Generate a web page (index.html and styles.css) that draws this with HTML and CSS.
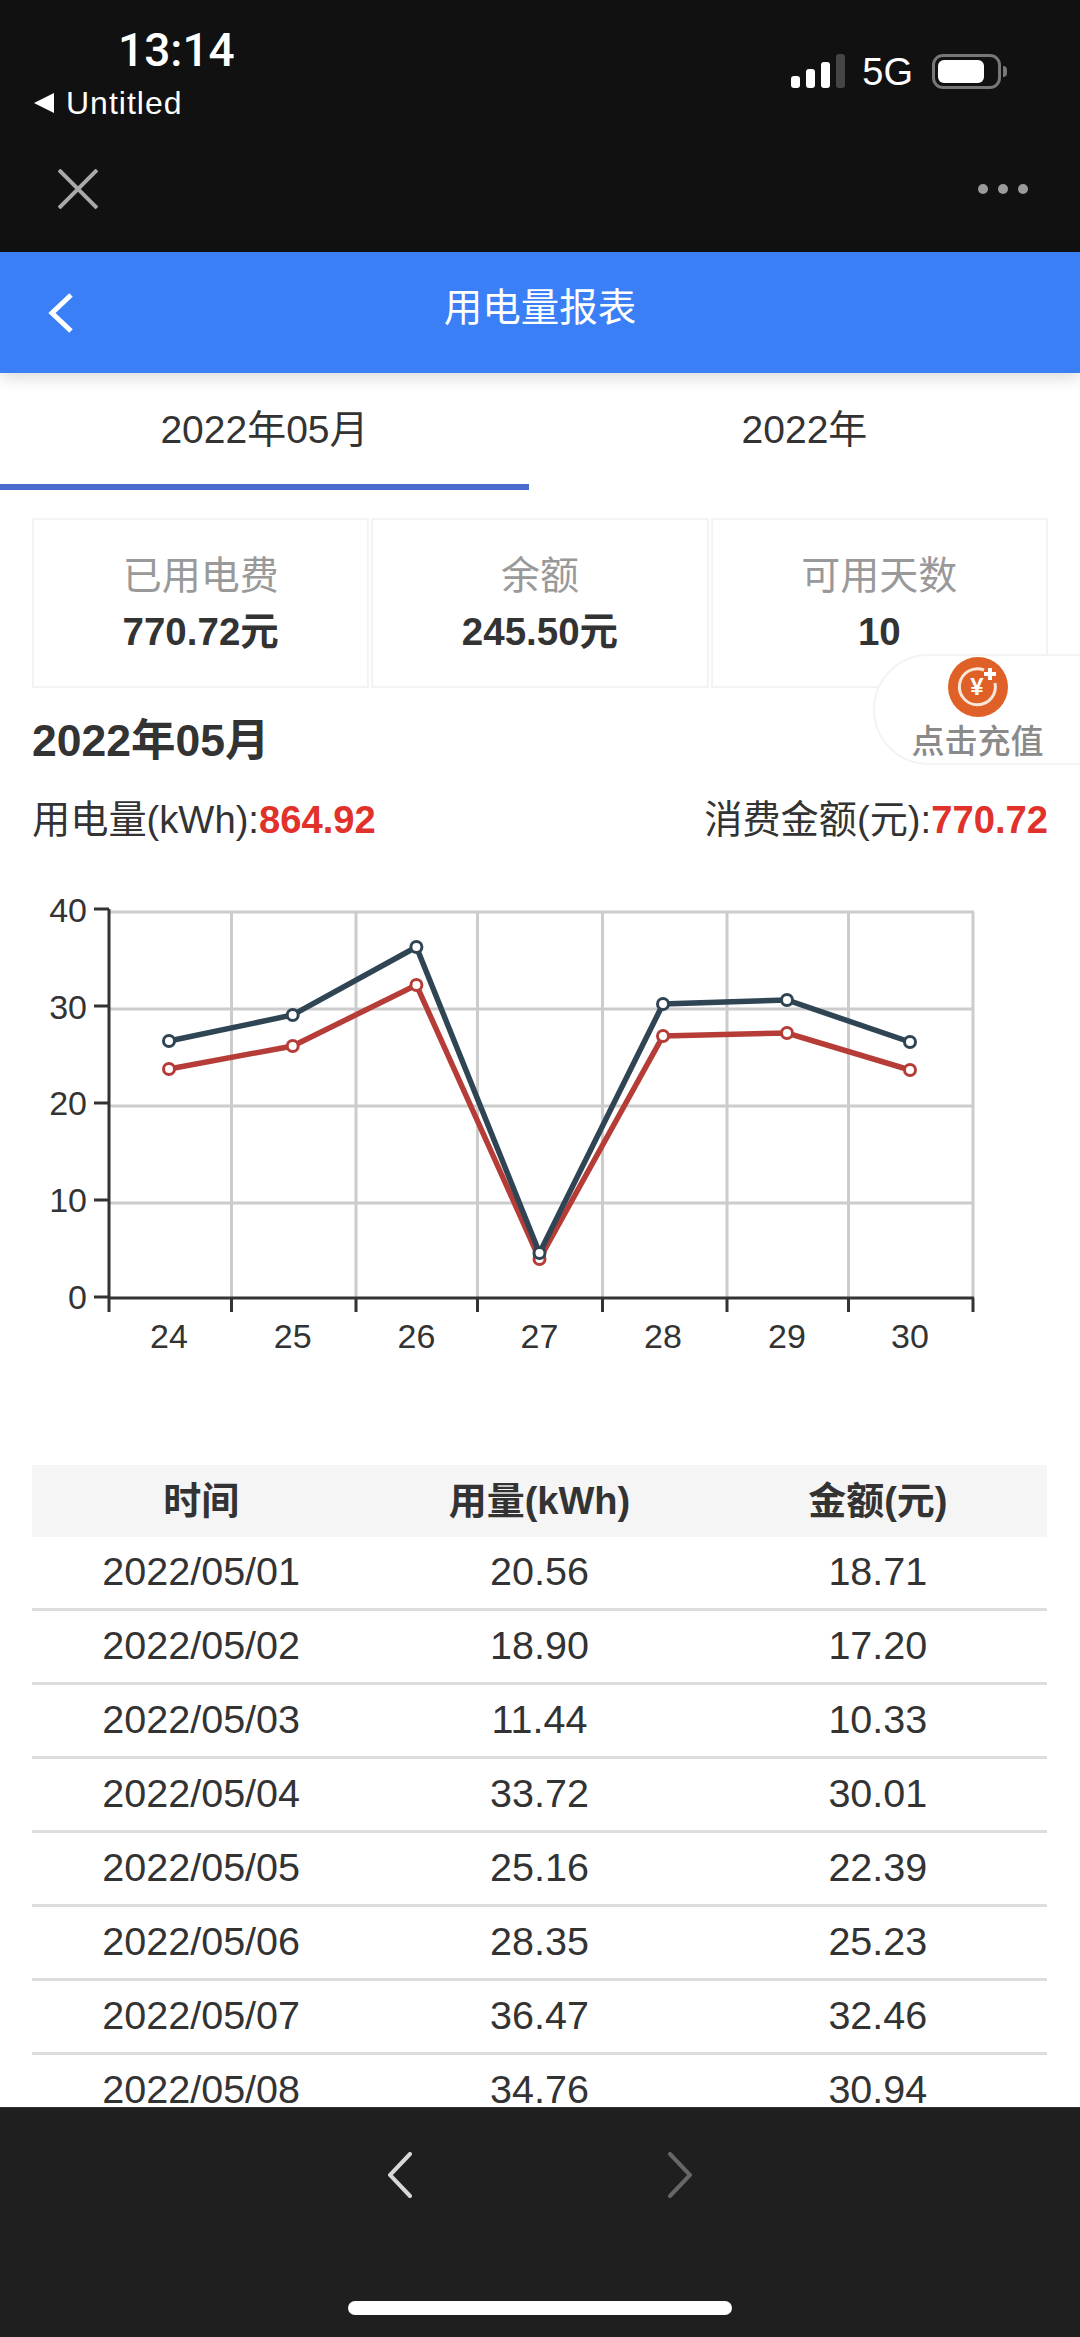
FILE: index.html
```html
<!DOCTYPE html>
<html>
<head lang="zh">
    <meta charset="UTF-8">
    <title>用电量报表</title>
    <link rel="stylesheet" href="styles.css">
</head>
<body>
<div class="page">
    <div class="topbar">
        <div class="status">
            <div class="status-left">
                <div class="time">13:14</div>
                <div class="back-app"><span class="back-tri"></span>Untitled</div>
            </div>
            <div class="status-right">
                <div class="signal">
                    <span class="bar bar1"></span>
                    <span class="bar bar2"></span>
                    <span class="bar bar3"></span>
                    <span class="bar bar4"></span>
                </div>
                <span class="net">5G</span>
                <div class="battery"><span class="battery-fill"></span></div>
                <span class="battery-nub"></span>
            </div>
        </div>
        <div class="browser-nav">
            <svg class="close-icon" width="40" height="40" viewBox="0 0 40 40">
                <path d="M1 1L39 39M39 1L1 39"/>
            </svg>
            <div class="dots"><span></span><span></span><span></span></div>
        </div>
    </div>

    <div class="header">
        <svg class="header-back" width="26" height="40" viewBox="0 0 26 40">
            <path d="M23 2L4 20L23 38"/>
        </svg>
        <div class="header-title">用电量报表</div>
    </div>

    <div class="main">
        <div class="tabs">
            <div class="tab tab-active">2022年05月</div>
            <div class="tab">2022年</div>
        </div>

        <div class="cards">
            <div class="card">
                <div class="card-label">已用电费</div>
                <div class="card-value">770.72元</div>
            </div>
            <div class="card">
                <div class="card-label">余额</div>
                <div class="card-value">245.50元</div>
            </div>
            <div class="card">
                <div class="card-label">可用天数</div>
                <div class="card-value">10</div>
            </div>
        </div>

        <div class="recharge">
            <svg class="recharge-icon" width="60" height="60" viewBox="0 0 60 60">
                <circle class="coin" cx="30" cy="30" r="30"/>
                <path class="coin-ring" d="M36 13A18 18 0 1 0 47 26"/>
                <text class="coin-yen" x="29" y="38">¥</text>
                <path class="coin-plus" d="M42 11V23M36 17H48"/>
            </svg>
            <div class="recharge-text">点击充值</div>
        </div>

        <div class="month-title">2022年05月</div>
        <div class="summary">
            <div>用电量(kWh):<span class="red">864.92</span></div>
            <div>消费金额(元):<span class="red">770.72</span></div>
        </div>

        <svg class="chart" width="1080" height="585" viewBox="0 880 1080 585">
            <!-- grid -->
            <path class="grid" d="M109 912H974M109 1009H974M109 1106H974M109 1203H974"/>
            <path class="grid" d="M231.500 912V1298M356 912V1298M477.500 912V1298M602.500 912V1298M727 912V1298M848.500 912V1298M973 912V1298"/>
            <!-- axis -->
            <path class="axis" d="M109 909V1298M94 909H109M94 1006H109M94 1103H109M94 1200H109M94 1297H109"/>
            <path class="axis" d="M108 1298H974M109 1298V1312M231.500 1298V1312M356 1298V1312M477.500 1298V1312M602.500 1298V1312M727 1298V1312M848.500 1298V1312M973 1298V1312"/>
            <text class="y-label" x="87" y="922">40</text>
            <text class="y-label" x="87" y="1019">30</text>
            <text class="y-label" x="87" y="1115">20</text>
            <text class="y-label" x="87" y="1212">10</text>
            <text class="y-label" x="87" y="1309">0</text>
            <text class="x-label" x="169" y="1348">24</text>
            <text class="x-label" x="292.700" y="1348">25</text>
            <text class="x-label" x="416.400" y="1348">26</text>
            <text class="x-label" x="539.500" y="1348">27</text>
            <text class="x-label" x="663" y="1348">28</text>
            <text class="x-label" x="787" y="1348">29</text>
            <text class="x-label" x="910" y="1348">30</text>
            <!-- series -->
            <polyline class="line line-red" points="169,1069 292.700,1046 416.400,985 539.500,1259 663,1036 787,1033 910,1070"/>
            <g class="dot dot-red">
                <circle cx="169" cy="1069" r="5.500"/>
                <circle cx="292.700" cy="1046" r="5.500"/>
                <circle cx="416.400" cy="985" r="5.500"/>
                <circle cx="539.500" cy="1259" r="5.500"/>
                <circle cx="663" cy="1036" r="5.500"/>
                <circle cx="787" cy="1033" r="5.500"/>
                <circle cx="910" cy="1070" r="5.500"/>
            </g>
            <polyline class="line line-navy" points="169,1041 292.700,1015 416.400,947 539.500,1253 663,1004 787,1000 910,1042"/>
            <g class="dot dot-navy">
                <circle cx="169" cy="1041" r="5.500"/>
                <circle cx="292.700" cy="1015" r="5.500"/>
                <circle cx="416.400" cy="947" r="5.500"/>
                <circle cx="539.500" cy="1253" r="5.500"/>
                <circle cx="663" cy="1004" r="5.500"/>
                <circle cx="787" cy="1000" r="5.500"/>
                <circle cx="910" cy="1042" r="5.500"/>
            </g>
        </svg>

        <table class="report">
            <thead>
                <tr><th>时间</th><th>用量(kWh)</th><th>金额(元)</th></tr>
            </thead>
            <tbody>
                <tr><td>2022/05/01</td><td>20.56</td><td>18.71</td></tr>
                <tr><td>2022/05/02</td><td>18.90</td><td>17.20</td></tr>
                <tr><td>2022/05/03</td><td>11.44</td><td>10.33</td></tr>
                <tr><td>2022/05/04</td><td>33.72</td><td>30.01</td></tr>
                <tr><td>2022/05/05</td><td>25.16</td><td>22.39</td></tr>
                <tr><td>2022/05/06</td><td>28.35</td><td>25.23</td></tr>
                <tr><td>2022/05/07</td><td>36.47</td><td>32.46</td></tr>
                <tr><td>2022/05/08</td><td>34.76</td><td>30.94</td></tr>
            </tbody>
        </table>
    </div>

    <div class="footer">
        <div class="footer-nav">
            <svg class="chev" width="24" height="46" viewBox="0 0 24 46"><path d="M22 2L2 23L22 44"/></svg>
            <svg class="chev chev-off" width="24" height="46" viewBox="0 0 24 46"><path d="M2 2L22 23L2 44"/></svg>
        </div>
        <div class="home-bar"></div>
    </div>
</div>
</body>
</html>
```

FILE: styles.css
```css
*{
    box-sizing: border-box;
}
html,body{
    margin: 0;
    padding: 0;
}
body{
    font-family: "Liberation Sans", "Noto Sans CJK SC", sans-serif;
    color: #333;
    background: #fff;
}
.page{
    width: 1080px;
    height: 2337px;
    display: flex;
    flex-direction: column;
    overflow: hidden;
}

/* phone top bar */
.topbar{
    height: 252px;
    background: #111112;
    color: #fff;
}
.status{
    height: 126px;
    display: flex;
    justify-content: space-between;
}
.status-left{
    padding: 24px 0 0 34px;
}
.time{
    margin-left: 84px;
    font-family: Roboto, sans-serif;
    font-weight: 500;
    font-size: 46px;
    line-height: 52px;
}
.back-app{
    display: flex;
    align-items: center;
    gap: 12px;
    margin-top: 14px;
    font-size: 32px;
    letter-spacing: 1px;
    line-height: 26px;
}
.back-tri{
    width: 0;
    height: 0;
    border-style: solid;
    border-width: 10px 20px 10px 0;
    border-color: transparent #fff transparent transparent;
}
.status-right{
    display: flex;
    align-items: flex-start;
    padding: 54px 73px 0 0;
}
.signal{
    display: flex;
    align-items: flex-end;
    gap: 6px;
    height: 34px;
}
.bar{
    width: 9px;
    border-radius: 3px;
    background: #fff;
}
.bar1{ height: 12px; }
.bar2{ height: 19px; }
.bar3{ height: 26px; }
.bar4{ height: 34px; background: #454545; }
.net{
    margin: 0 19px 0 17px;
    font-size: 38px;
    line-height: 36px;
}
.battery{
    width: 69px;
    height: 35px;
    padding: 3px;
    border: 3px solid #777;
    border-radius: 11px;
}
.battery-fill{
    display: block;
    width: 46px;
    height: 100%;
    border-radius: 6px;
    background: #fff;
}
.battery-nub{
    width: 4px;
    height: 11px;
    margin: 12px 0 0 2px;
    border-radius: 0 4px 4px 0;
    background: #777;
}
.browser-nav{
    height: 126px;
    display: flex;
    align-items: center;
    justify-content: space-between;
    padding: 0 52px 0 58px;
}
.close-icon path{
    fill: none;
    stroke: #a9a9a9;
    stroke-width: 4;
}
.dots{
    display: flex;
    gap: 10px;
}
.dots span{
    width: 10px;
    height: 10px;
    border-radius: 50%;
    background: #9a9a9a;
}

/* blue header */
.header{
    height: 121px;
    flex: none;
    display: grid;
    grid-template-columns: 1fr auto 1fr;
    align-items: center;
    padding-left: 48px;
    padding-right: 48px;
    background: #3a7ff6;
    box-shadow: 0 4px 16px rgba(0,0,0,.16);
    position: relative;
    z-index: 1;
}
.header-back path{
    fill: none;
    stroke: #fff;
    stroke-width: 5;
}
.header-title{
    color: #fff;
    font-size: 38.500px;
    margin-bottom: 17px;
}

.main{
    flex: 1;
    position: relative;
    overflow: hidden;
    background: #fff;
}

.tabs{
    display: flex;
    height: 117px;
    font-size: 39px;
}
.tab{
    flex: 1;
    text-align: center;
    line-height: 114px;
}
.tab-active{
    flex: none;
    width: 529px;
    border-bottom: 6px solid #4b6bcf;
}

.cards{
    display: grid;
    grid-template-columns: repeat(3, 1fr);
    gap: 2px;
    margin: 28px 32px 0;
}
.card{
    height: 170px;
    padding-top: 32px;
    border: 2px solid #f3f3f3;
    text-align: center;
}
.card-label{
    color: #999;
    font-size: 39px;
    line-height: 48px;
}
.card-value{
    margin-top: 6px;
    font-size: 38.500px;
    font-weight: bold;
    line-height: 52px;
}

.recharge{
    position: absolute;
    top: 281px;
    right: -2px;
    width: 209px;
    height: 111px;
    border: 2px solid #f3f3f3;
    border-radius: 56px 0 0 56px;
    background: #fff;
    display: flex;
    flex-direction: column;
    align-items: center;
    padding: 1px 0 0 0;
}
.recharge-icon{
    flex: none;
}
.recharge-text{
    margin-top: 6px;
    color: #8a8a8a;
    font-size: 33px;
    font-weight: 500;
    line-height: 38px;
}
.coin{
    fill: #df6127;
}
.coin-ring{
    fill: none;
    stroke: #fbe6d8;
    stroke-width: 3;
}
.coin-plus{
    fill: none;
    stroke: #fff;
    stroke-width: 4;
}
.coin-yen{
    fill: #fff;
    font-size: 24px;
    font-weight: bold;
    text-anchor: middle;
}

.month-title{
    margin: 23px 32px 0;
    font-size: 44.500px;
    font-weight: bold;
    line-height: 60px;
}
.summary{
    display: flex;
    justify-content: space-between;
    margin: 19px 32px 0;
    font-size: 38.200px;
    line-height: 60px;
}
.red{
    color: #e0322a;
    font-weight: bold;
}

/* chart */
.chart{
    display: block;
    margin-top: 30px;
}
.grid{
    fill: none;
    stroke: #ccc;
    stroke-width: 3;
}
.axis{
    fill: none;
    stroke: #333;
    stroke-width: 3;
}
.y-label{
    fill: #333;
    font-size: 34px;
    text-anchor: end;
}
.x-label{
    fill: #333;
    font-size: 34px;
    text-anchor: middle;
}
.line{
    fill: none;
    stroke-width: 5.500;
}
.line-red{ stroke: #b63d37; }
.line-navy{ stroke: #2f4554; }
.dot circle{
    fill: #fff;
    stroke-width: 3;
}
.dot-red circle{ stroke: #b63d37; }
.dot-navy circle{ stroke: #2f4554; }

/* table */
.report{
    width: 1015px;
    margin: 0 32px;
    table-layout: fixed;
    border-collapse: separate;
    border-spacing: 0;
    font-size: 39.500px;
    text-align: center;
}
.report th{
    height: 72px;
    padding: 0 0 7px;
    font-size: 38px;
    background: #f5f5f5;
}
.report td{
    height: 74px;
    padding: 0 0 2px;
    border-bottom: 3px solid #ddd;
}

/* bottom bar */
.footer{
    height: 230px;
    flex: none;
    background: #1f1f1f;
    border-top: 1px solid #333;
    display: flex;
    flex-direction: column;
    align-items: center;
    padding-top: 44px;
    position: relative;
}
.footer-nav{
    display: flex;
    gap: 256px;
}
.chev path{
    fill: none;
    stroke: #d8d8d8;
    stroke-width: 4;
    stroke-linecap: round;
}
.chev-off path{
    stroke: #666;
}
.home-bar{
    width: 384px;
    height: 14px;
    margin-top: 103px;
    border-radius: 7px;
    background: #fff;
}
```
